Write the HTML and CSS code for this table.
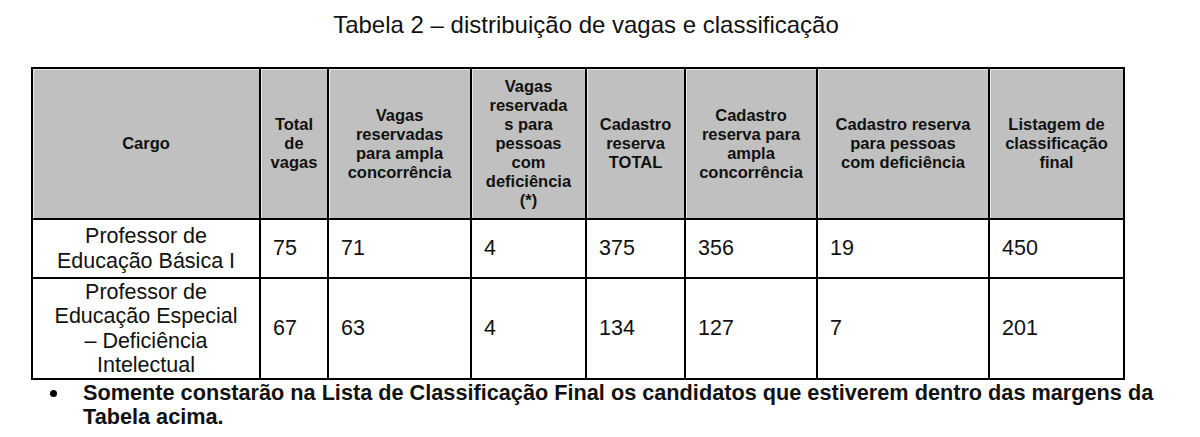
FILE: index.html
```html
<!DOCTYPE html>
<html lang="pt">
<head>
<meta charset="utf-8">
<title>Tabela 2</title>
<link rel="stylesheet" href="styles.css">
</head>
<body>
<div class="page">
  <h1 class="title">Tabela 2 – distribuição de vagas e classificação</h1>
  <table class="grid">
    <colgroup>
      <col class="c-cargo">
      <col class="c-total">
      <col class="c-ampla">
      <col class="c-pcd">
      <col class="c-cad">
      <col class="c-cadampla">
      <col class="c-cadpcd">
      <col class="c-lista">
    </colgroup>
    <thead>
      <tr class="head">
        <th>Cargo</th>
        <th>Total<br>de<br>vagas</th>
        <th>Vagas<br>reservadas<br>para ampla<br>concorrência</th>
        <th>Vagas<br>reservada<br>s para<br>pessoas<br>com<br>deficiência<br>(*)</th>
        <th>Cadastro<br>reserva<br>TOTAL</th>
        <th>Cadastro<br>reserva para<br>ampla<br>concorrência</th>
        <th>Cadastro reserva<br>para pessoas<br>com deficiência</th>
        <th>Listagem de<br>classificação<br>final</th>
      </tr>
    </thead>
    <tbody>
      <tr class="r1">
        <td class="cargo">Professor de<br>Educação Básica I</td>
        <td>75</td>
        <td>71</td>
        <td>4</td>
        <td>375</td>
        <td>356</td>
        <td>19</td>
        <td>450</td>
      </tr>
      <tr class="r2">
        <td class="cargo">Professor de<br>Educação Especial<br>– Deficiência<br>Intelectual</td>
        <td>67</td>
        <td>63</td>
        <td>4</td>
        <td>134</td>
        <td>127</td>
        <td>7</td>
        <td>201</td>
      </tr>
    </tbody>
  </table>
  <div class="note">
    <span class="dot"></span>
    <p class="note-text">Somente constarão na Lista de Classificação Final os candidatos que estiverem dentro das margens da<br>Tabela acima.</p>
  </div>
</div>
</body>
</html>
```
FILE: styles.css
```css
* {
  box-sizing: border-box;
}

html, body {
  margin: 0;
  padding: 0;
  background: #ffffff;
}

body {
  font-family: "Liberation Sans", Arial, sans-serif;
  color: #000000;
  width: 1200px;
  height: 437px;
  overflow: hidden;
}

.page {
  padding-top: 11px;
}

.title {
  margin: 0 28px 0 0;
  font-size: 24px;
  font-weight: 400;
  line-height: 28px;
  text-align: center;
  color: #111111;
}

.grid {
  margin: 28px 0 0 31px;
  width: 1094px;
  border-collapse: collapse;
  table-layout: fixed;
  border: 2px solid #000000;
}

.c-cargo { width: 228px; }
.c-total { width: 68px; }
.c-ampla { width: 143px; }
.c-pcd { width: 115px; }
.c-cad { width: 99px; }
.c-cadampla { width: 132px; }
.c-cadpcd { width: 172px; }
.c-lista { width: 135px; }

.grid th,
.grid td {
  border: 2px solid #000000;
  padding: 0;
  vertical-align: middle;
}

.grid th {
  background: #c0c0c0;
  box-shadow: inset 1px 1px 0 #e6e6e6;
  font-size: 16.5px;
  font-weight: 700;
  line-height: 19px;
  text-align: center;
  color: #111111;
  padding: 0 2px;
}

.head {
  height: 151px;
}

.r1 {
  height: 59px;
}

.r2 {
  height: 101px;
}

.grid td {
  font-size: 21.5px;
  line-height: 24.5px;
  text-align: left;
  padding-left: 12px;
  color: #111111;
}

.grid td.cargo {
  text-align: center;
  padding: 0 4px;
}

.note {
  display: flex;
  align-items: flex-start;
  margin-top: 1px;
}

.dot {
  flex: none;
  width: 7px;
  height: 7px;
  border-radius: 50%;
  background: #000000;
  margin: 9px 0 0 49.5px;
}

.note-text {
  margin: 0 0 0 26.5px;
  font-size: 21.7px;
  font-weight: 700;
  line-height: 24px;
  color: #111111;
  white-space: nowrap;
}
```
